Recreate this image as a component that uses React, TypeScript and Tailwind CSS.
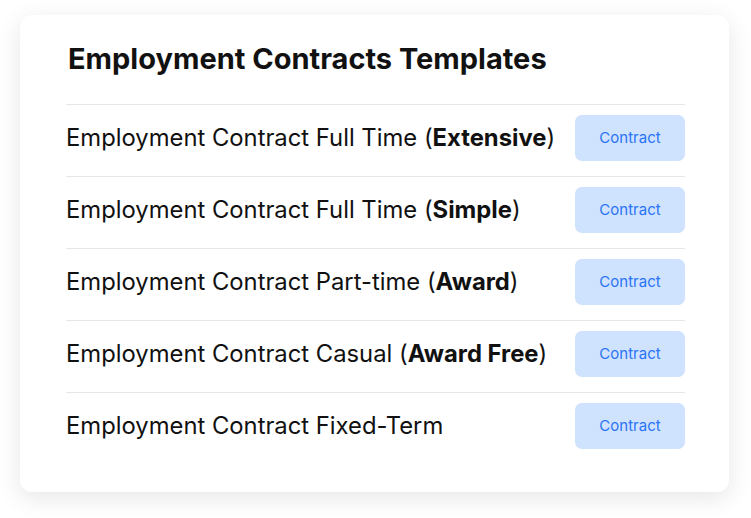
const rows: { base: string; bold?: string }[] = [
  { base: "Employment Contract Full Time", bold: "Extensive" },
  { base: "Employment Contract Full Time", bold: "Simple" },
  { base: "Employment Contract Part-time", bold: "Award" },
  { base: "Employment Contract Casual", bold: "Award Free" },
  { base: "Employment Contract Fixed-Term" },
];

export default function App() {
  return (
    <div
      className="min-h-screen w-full bg-white pt-[15px] pl-[20px]"
      style={{ fontFamily: "Inter, 'Noto Sans', sans-serif" }}
    >
      <div className="w-[709px] rounded-[12px] bg-white pt-[26px] pr-[44px] pb-[28px] pl-[46px] shadow-[0_6px_24px_rgba(0,0,0,0.10)]">
        <h1 className="pl-[2px] pb-[27px] text-[29px] font-bold leading-[36px] text-[#111111]">
          Employment Contracts Templates
        </h1>
        <div>
          {rows.map((r, i) => (
            <div
              key={i}
              className="flex items-center justify-between border-t border-[#e6e6e6] pt-[10px] pb-[15px]"
            >
              <span className="text-[23.8px] leading-[30px] text-[#111111]">
                {r.base}
                {r.bold ? (
                  <>
                    {" ("}
                    <b className="font-bold">{r.bold}</b>)
                  </>
                ) : null}
              </span>
              <button className="h-[46px] w-[110px] rounded-[7px] bg-[#cfe2fe] text-[15px] text-[#2a74f5]">
                Contract
              </button>
            </div>
          ))}
        </div>
      </div>
    </div>
  );
}
